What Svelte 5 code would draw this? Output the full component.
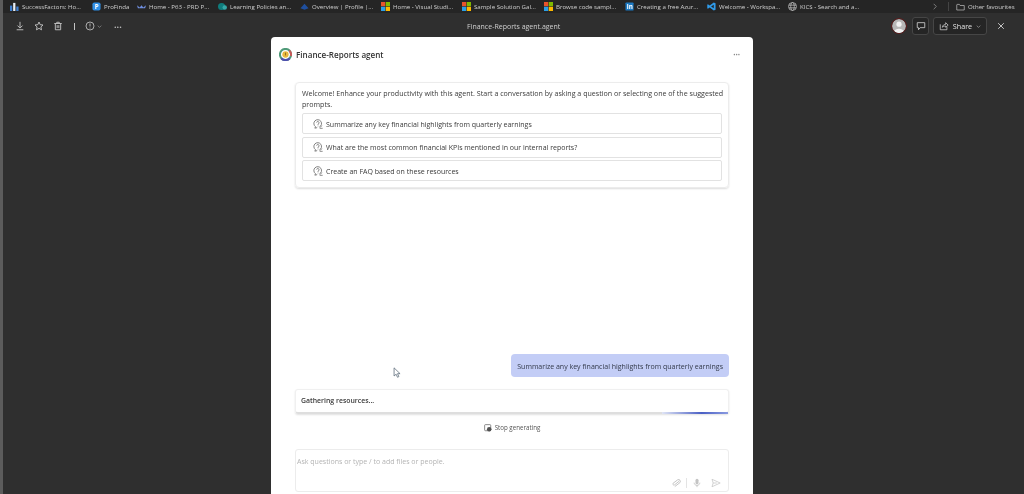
<script>
  // bookmark bar entries, width = slot the browser gives each one
  const bookmarks = [
    { label: 'SuccessFactors: Ho...', icon: 'sf', width: 82 },
    { label: 'ProFinda', icon: 'pf', width: 45 },
    { label: 'Home - P63 - PRD P...', icon: 'p63', width: 81 },
    { label: 'Learning Policies an...', icon: 'sp', width: 82 },
    { label: 'Overview | Profile |...', icon: 'ov', width: 81 },
    { label: 'Home - Visual Studi...', icon: 'ms', width: 81 },
    { label: 'Sample Solution Gal...', icon: 'ms', width: 82 },
    { label: 'Browse code sampl...', icon: 'ms', width: 81 },
    { label: 'Creating a free Azur...', icon: 'li', width: 82 },
    { label: 'Welcome - Workspa...', icon: 'vs', width: 81 },
    { label: 'KICS - Search and a...', icon: 'globe', width: 135 }
  ];

  const prompts = [
    'Summarize any key financial highlights from quarterly earnings',
    'What are the most common financial KPIs mentioned in our internal reports?',
    'Create an FAQ based on these resources'
  ];
</script>

<div class="screen">
  <div class="bookmarks">
    {#each bookmarks as b}
      <div class="bookmark" style="width: {b.width}px">
        <svg class="bm-icon" viewBox="0 0 10 10">
          {#if b.icon === 'sf'}
            <rect x="0" y="4" width="2.5" height="6" fill="#3f7fd0" />
            <rect x="3.5" y="1" width="2.5" height="9" fill="#e8eef5" />
            <rect x="7" y="5" width="2.5" height="5" fill="#3f7fd0" />
          {:else if b.icon === 'pf'}
            <rect x="0.5" y="0.5" width="9" height="9" rx="2" fill="#2f8fe6" />
            <text x="3" y="7.8" class="bm-glyph">P</text>
          {:else if b.icon === 'p63'}
            <path d="M0 3.5 L3 6 L5 3.5 L7 6 L10 3.5 L9 7 L1 7 Z" fill="#6f8fe0" />
          {:else if b.icon === 'sp'}
            <circle cx="4" cy="5" r="4" fill="#0f7c7c" />
            <circle cx="7.5" cy="6" r="2.5" fill="#36a8a8" />
          {:else if b.icon === 'ov'}
            <path d="M0.5 7 L5 2 L9.5 7 L5 8.5 Z" fill="#1f4f9e" />
          {:else if b.icon === 'ms'}
            <rect x="0" y="0" width="4.7" height="4.7" fill="#e8532b" />
            <rect x="5.3" y="0" width="4.7" height="4.7" fill="#7fba00" />
            <rect x="0" y="5.3" width="4.7" height="4.7" fill="#2a9fe8" />
            <rect x="5.3" y="5.3" width="4.7" height="4.7" fill="#fdb900" />
          {:else if b.icon === 'li'}
            <rect x="0.5" y="0.5" width="9" height="9" rx="1" fill="#1a78c2" />
            <text x="2" y="7.8" class="bm-glyph">in</text>
          {:else if b.icon === 'vs'}
            <path d="M7.5 0.5 L9.5 1.5 V8.5 L7.5 9.5 L3 6 L1 7.5 L0.3 7 V3 L1 2.5 L3 4 Z M7.5 3 L4.5 5 L7.5 7 Z" fill="#2f9bea" fill-rule="evenodd" />
          {:else}
            <g fill="none" stroke="#c4c4c4" stroke-width="0.8">
              <circle cx="5" cy="5" r="4.4" />
              <ellipse cx="5" cy="5" rx="2" ry="4.4" />
              <path d="M0.8 3.5 H9.2 M0.8 6.5 H9.2" />
            </g>
          {/if}
        </svg>
        <span>{b.label}</span>
      </div>
    {/each}
    <svg class="more-chevron" viewBox="0 0 6 10"><path d="M1 1 L5 5 L1 9" fill="none" stroke="#a8a8a8" stroke-width="1" /></svg>
    <div class="bar-divider"></div>
    <div class="other">
      <svg viewBox="0 0 12 10"><path d="M1 2 V9 H11 V3 H5.5 L4.5 1.5 H1.5 Z" fill="none" stroke="#c8c8c8" stroke-width="0.9" /></svg>
      <span>Other favourites</span>
    </div>
  </div>

  <div class="viewer">
    <div class="toolbar">
      <div class="tools">
        <svg viewBox="0 0 12 12"><path d="M6 1 V8 M3 5.5 L6 8.5 L9 5.5 M2 10.5 H10" fill="none" stroke="#c4c4c4" stroke-width="1.1" /></svg>
        <svg viewBox="0 0 12 12"><path d="M6 1.2 L7.4 4.4 L10.8 4.8 L8.3 7.1 L9 10.6 L6 8.8 L3 10.6 L3.7 7.1 L1.2 4.8 L4.6 4.4 Z" fill="none" stroke="#c4c4c4" stroke-width="1.1" /></svg>
        <svg viewBox="0 0 12 12"><path d="M1.5 3 H10.5 M4.5 3 V1.5 H7.5 V3 M2.8 3 V10.5 H9.2 V3 M5 5 V8.5 M7 5 V8.5" fill="none" stroke="#c4c4c4" stroke-width="1.1" /></svg>
        <div class="tool-sep"></div>
        <div class="info">
          <svg viewBox="0 0 12 12"><circle cx="6" cy="6" r="4.8" fill="none" stroke="#c4c4c4" stroke-width="1" /><path d="M6 3 V6.6 M6 8 V9" stroke="#c4c4c4" stroke-width="1" /></svg>
          <svg class="caret" viewBox="0 0 8 5"><path d="M1 1 L4 4 L7 1" fill="none" stroke="#a8a8a8" stroke-width="1" /></svg>
        </div>
        <span class="dots">···</span>
      </div>
      <div class="file-name">Finance-Reports agent.agent</div>
      <div class="actions">
        <div class="avatar">
          <svg viewBox="0 0 14 14"><circle cx="7" cy="7" r="7" fill="#b8b8b8" /><circle cx="7" cy="5.2" r="2.6" fill="#f2f2f2" /><path d="M2.2 12.2 C3 8.8 11 8.8 11.8 12.2 A7 7 0 0 1 2.2 12.2 Z" fill="#f2f2f2" /></svg>
        </div>
        <button class="comment-btn" aria-label="Comments">
          <svg viewBox="0 0 12 12"><path d="M1.5 2 H10.5 V8 H5 L3 10.5 V8 H1.5 Z" fill="none" stroke="#d0d0d0" stroke-width="1" /></svg>
        </button>
        <button class="share-btn">
          <svg viewBox="0 0 12 12"><path d="M1.5 4 V10.5 H9.5 V7 M4 7.5 C4.5 5 6 4 8 4 V2 L11 5 L8 7.5 V6 C6.5 6 5 6.3 4 7.5 Z" fill="none" stroke="#d0d0d0" stroke-width="0.9" /></svg>
          <span>Share</span>
          <svg class="caret" viewBox="0 0 8 5"><path d="M1 1 L4 4 L7 1" fill="none" stroke="#b8b8b8" stroke-width="1" /></svg>
        </button>
        <svg class="close" viewBox="0 0 10 10"><path d="M1.5 1.5 L8.5 8.5 M8.5 1.5 L1.5 8.5" stroke="#d8d8d8" stroke-width="1.1" /></svg>
      </div>
    </div>

    <div class="stage">
      <div class="panel">
        <div class="panel-head">
          <div class="agent">
            <svg viewBox="0 0 14 14">
              <circle cx="7" cy="7" r="6" fill="none" stroke="#4f9a78" stroke-width="2.2" />
              <path d="M2.5 11 A6 6 0 0 0 11.5 11" fill="none" stroke="#4f4fb0" stroke-width="2.2" />
              <path d="M11 2.6 A6 6 0 0 1 12.8 8.5" fill="none" stroke="#c65a5a" stroke-width="2.2" />
              <circle cx="7" cy="7" r="3.4" fill="#e8b93c" />
              <path d="M7 5 V8" stroke="#8a6a20" stroke-width="1" />
            </svg>
            <span>Finance-Reports agent</span>
          </div>
          <span class="panel-dots">···</span>
        </div>

        <div class="welcome">
          <p>Welcome! Enhance your productivity with this agent. Start a conversation by asking a question or selecting one of the suggested prompts.</p>
          <div class="prompts">
            {#each prompts as prompt}
              <div class="prompt">
                <svg viewBox="0 0 12 12">
                  <path d="M7.6 9.6 A4.6 4.6 0 1 0 3 9.2 L2.2 11 L5 10.4" fill="none" stroke="#6a6a6a" stroke-width="1" />
                  <path d="M4.3 4.3 A1.5 1.5 0 1 1 6 6 V7 M6 8 V8.8" fill="none" stroke="#6a6a6a" stroke-width="0.9" />
                  <path d="M8 11.2 H11.6 M10.6 8 L8.4 10.4" fill="none" stroke="#6a6a6a" stroke-width="0.9" />
                </svg>
                <span>{prompt}</span>
              </div>
            {/each}
          </div>
        </div>

        <div class="chat">
          <div class="user-msg">Summarize any key financial highlights from quarterly earnings</div>
          <div class="status">
            <span>Gathering resources...</span>
            <div class="progress"></div>
          </div>
          <div class="stop">
            <svg viewBox="0 0 10 10"><rect x="0.8" y="0.8" width="7.6" height="7.6" rx="1" fill="none" stroke="#606060" stroke-width="0.9" /><circle cx="6.5" cy="6.5" r="2.8" fill="#505050" /></svg>
            <span>Stop generating</span>
          </div>
        </div>

        <div class="composer">
          <div class="placeholder">Ask questions or type / to add files or people.</div>
          <div class="composer-icons">
            <svg viewBox="0 0 12 12"><path d="M9.8 3 L4.4 8.6 A1.3 1.3 0 0 1 2.6 6.8 L7.6 1.8 A2.2 2.2 0 0 1 10.6 4.9 L5.2 10.4" fill="none" stroke="#bdbdbd" stroke-width="1" transform="rotate(8 6 6)" /></svg>
            <div class="composer-sep"></div>
            <svg viewBox="0 0 12 12"><rect x="4.2" y="1" width="3.6" height="6.4" rx="1.8" fill="#c4c4c4" /><path d="M2.6 5.6 C2.6 10 9.4 10 9.4 5.6 M6 8.8 V11" fill="none" stroke="#bdbdbd" stroke-width="0.9" /></svg>
            <svg class="send" viewBox="0 0 12 12"><path d="M1.2 1.5 L11 6 L1.2 10.5 L2.6 6 Z M2.6 6 H7" fill="none" stroke="#c4c4c4" stroke-width="0.9" /></svg>
          </div>
        </div>

        <svg class="cursor" viewBox="0 0 10 14"><path d="M1 1 V10.5 L3.4 8.4 L5 12 L6.6 11.2 L5 7.8 H8 Z" fill="#fff" stroke="#5a6a78" stroke-width="0.9" /></svg>
      </div>
    </div>
  </div>
</div>

<style>
  :global(body) {
    background: #2f2f2f;
    font-family: "Open Sans", "Liberation Sans", sans-serif;
    overflow: hidden;
  }

  .screen {
    width: 1024px;
    height: 494px;
    overflow: hidden;
    display: flex;
    flex-direction: column;
    background: #2f2f2f;
    border-left: 3px solid #5c5c5c;
    box-sizing: border-box;
    /* the capture is a soft, upscaled video frame */
    filter: blur(0.4px);
  }

  .bookmarks {
    height: 13px;
    flex: none;
    display: flex;
    align-items: center;
    padding-left: 7px;
    background: #252525;
    color: #d0d0d0;
    font-size: 6.1px;
  }

  .bookmark {
    flex: none;
    display: flex;
    align-items: center;
    gap: 3px;
    white-space: nowrap;
  }

  .bm-icon {
    width: 9px;
    height: 9px;
    flex: none;
  }

  .bm-glyph {
    font-size: 7px;
    font-weight: 700;
    fill: #fff;
  }

  .more-chevron {
    width: 4px;
    height: 7px;
    margin-left: 10px;
  }

  .bar-divider {
    width: 1px;
    height: 9px;
    margin-left: 11px;
    background: #444;
  }

  .other {
    display: flex;
    align-items: center;
    gap: 3px;
    margin-left: 7px;
    white-space: nowrap;
  }

  .other svg {
    width: 9px;
    height: 8px;
  }

  .viewer {
    flex: 1;
    min-height: 0;
    display: flex;
    flex-direction: column;
    background: #2f2f2f;
  }

  .toolbar {
    height: 24px;
    box-sizing: border-box;
    flex: none;
    display: flex;
    align-items: center;
    padding: 2px 0 0 12px;
    color: #cfcfcf;
  }

  .tools {
    display: flex;
    align-items: center;
    gap: 9px;
    width: 118px;
  }

  .tools > svg {
    width: 10px;
    height: 10px;
  }

  .tool-sep {
    width: 1px;
    height: 7px;
    margin: 0 1px 0 2px;
    background: #c4c4c4;
  }

  .info {
    display: flex;
    align-items: center;
    gap: 2px;
  }

  .info svg:first-child {
    width: 10px;
    height: 10px;
  }

  .caret {
    width: 5px;
    height: 3px;
  }

  .dots {
    margin-left: 3px;
    font-size: 9px;
    font-weight: 700;
    line-height: 1;
    color: #bbb;
  }

  .file-name {
    flex: 1;
    padding-left: 334px;
    font-size: 7px;
    color: #cfcfcf;
  }

  .actions {
    display: flex;
    align-items: center;
    margin-right: 19px;
  }

  .avatar {
    width: 14px;
    height: 14px;
    border-radius: 50%;
    border: 1px solid #5e1c1c;
    display: flex;
    overflow: hidden;
    margin-right: 5px;
  }

  .avatar svg {
    width: 100%;
    height: 100%;
  }

  button {
    font-family: inherit;
    color: #e0e0e0;
    background: #252525;
    border: 1px solid #464646;
    border-radius: 3px;
    padding: 0;
    display: flex;
    align-items: center;
    justify-content: center;
    height: 18px;
  }

  .comment-btn {
    width: 17px;
  }

  .comment-btn svg {
    width: 10px;
    height: 10px;
  }

  .share-btn {
    width: 54px;
    margin-left: 4px;
    gap: 4px;
    font-size: 7.2px;
  }

  .share-btn svg:first-child {
    width: 10px;
    height: 10px;
  }

  .close {
    width: 8px;
    height: 8px;
    margin-left: 10px;
  }

  .stage {
    flex: 1;
    min-height: 0;
    padding-left: 268px;
  }

  .panel {
    width: 482px;
    height: 100%;
    box-sizing: border-box;
    position: relative;
    display: flex;
    flex-direction: column;
    padding: 0 24px;
    background: #fff;
    border-radius: 4px 4px 0 0;
    color: #3a3a3a;
  }

  .panel-head {
    height: 34px;
    flex: none;
    margin: 0 -11px 0 -16px;
    display: flex;
    align-items: center;
    justify-content: space-between;
  }

  .agent {
    display: flex;
    align-items: center;
    gap: 4px;
    font-size: 8.1px;
    font-weight: 600;
    color: #333;
  }

  .agent svg {
    width: 13px;
    height: 13px;
  }

  .panel-dots {
    font-size: 8px;
    font-weight: 700;
    color: #8a8a8a;
  }

  .welcome {
    flex: none;
    margin-top: 11px;
    padding: 5px 6px 6px 6px;
    border: 1px solid #ececec;
    border-radius: 4px;
    box-shadow: 0 1px 2px rgba(0, 0, 0, 0.14);
  }

  .welcome p {
    margin: 0 -4px 3px 0;
    font-size: 7.1px;
    line-height: 11px;
  }

  .prompts {
    display: flex;
    flex-direction: column;
    gap: 2.5px;
  }

  .prompt {
    height: 21px;
    box-sizing: border-box;
    display: flex;
    align-items: center;
    gap: 3px;
    padding-left: 10px;
    border: 1px solid #e2e2e2;
    border-radius: 2px;
    font-size: 7.03px;
  }

  .prompt svg {
    width: 10px;
    height: 10px;
  }

  .chat {
    flex: 1;
    min-height: 0;
    display: flex;
    flex-direction: column;
    justify-content: flex-end;
  }

  .user-msg {
    align-self: flex-end;
    height: 23px;
    display: flex;
    align-items: center;
    padding: 0 6px;
    background: #c3cdf6;
    border-radius: 4px;
    font-size: 7.03px;
    color: #333a4a;
    white-space: nowrap;
  }

  .status {
    position: relative;
    height: 25px;
    box-sizing: border-box;
    margin-top: 12px;
    display: flex;
    align-items: center;
    padding: 0 0 2px 5px;
    border: 1px solid #f0f0f0;
    border-bottom: 2px solid #dedede;
    border-radius: 3px;
    font-size: 6.9px;
    font-weight: 600;
    box-shadow: 0 1px 2px rgba(0, 0, 0, 0.12);
  }

  .progress {
    position: absolute;
    right: 0;
    bottom: -2px;
    width: 66px;
    height: 2px;
    background: linear-gradient(90deg, #dfe4f5, #4a5fc4 60%, #8a9ae0);
  }

  .stop {
    height: 27px;
    display: flex;
    align-items: center;
    justify-content: center;
    gap: 3px;
    font-size: 6.2px;
    color: #555;
  }

  .stop svg {
    width: 8px;
    height: 8px;
  }

  .composer {
    flex: none;
    height: 43px;
    box-sizing: border-box;
    margin-top: 8px;
    margin-bottom: 2px;
    position: relative;
    padding: 6px 1px;
    border: 1px solid #ececec;
    border-radius: 3px;
  }

  .placeholder {
    font-size: 7.03px;
    color: #b4b4b4;
  }

  .composer-icons {
    position: absolute;
    right: 7px;
    bottom: 3px;
    display: flex;
    align-items: center;
    gap: 5px;
  }

  .composer-icons svg {
    width: 10px;
    height: 10px;
  }

  .composer-sep {
    width: 1px;
    height: 10px;
    background: #e4e4e4;
  }

  .send {
    margin-left: 4px;
  }

  .cursor {
    position: absolute;
    left: 122px;
    top: 330px;
    width: 9px;
    height: 12px;
  }
</style>
